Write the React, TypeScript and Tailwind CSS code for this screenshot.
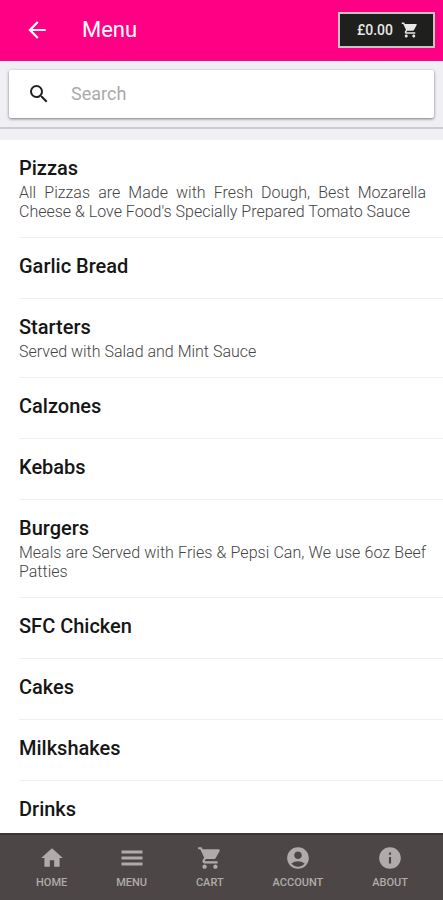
import React from 'react';
import {
  MdAccountCircle,
  MdArrowBack,
  MdHome,
  MdInfo,
  MdSearch,
  MdShoppingCart,
} from 'react-icons/md';

const MenuLines = ({ className }: { className?: string }) => (
  <svg viewBox="0 0 26 26" fill="currentColor" className={className} aria-hidden="true">
    <path d="M2.5 5.5h21v3h-21zM2.5 11.5h21v3h-21zM2.5 17.5h21v3h-21z" />
  </svg>
);

const categories = [
  {
    name: 'Pizzas',
    description:
      "All Pizzas are Made with Fresh Dough, Best Mozarella Cheese & Love Food's Specially Prepared Tomato Sauce",
  },
  { name: 'Garlic Bread' },
  { name: 'Starters', description: 'Served with Salad and Mint Sauce' },
  { name: 'Calzones' },
  { name: 'Kebabs' },
  {
    name: 'Burgers',
    description: 'Meals are Served with Fries & Pepsi Can, We use 6oz Beef Patties',
  },
  { name: 'SFC Chicken' },
  { name: 'Cakes' },
  { name: 'Milkshakes' },
  { name: 'Drinks' },
];

const tabs = [
  { label: 'HOME', icon: MdHome },
  { label: 'MENU', icon: MenuLines },
  { label: 'CART', icon: MdShoppingCart },
  { label: 'ACCOUNT', icon: MdAccountCircle },
  { label: 'ABOUT', icon: MdInfo },
];

const Header = () => (
  <header className="flex h-[61px] shrink-0 items-center bg-[#ff0084] pr-2 pb-[2px] pl-6 text-white">
    <button type="button" aria-label="Back" className="flex">
      <MdArrowBack className="size-[26px]" />
    </button>
    <h1 className="ml-8 flex-1 text-[22px] leading-7">Menu</h1>
    <button
      type="button"
      className="flex h-9 items-center gap-2 border-2 border-[#c9c4c6] bg-[#1f1f1d] pr-[14px] pl-[17px] text-sm font-medium text-[#e8e8e8]"
    >
      £0.00
      <MdShoppingCart className="size-[18px]" />
    </button>
  </header>
);

const SearchBar = () => (
  <div className="shrink-0 border-b-2 border-[#cdcdd1] bg-[#efeff4] px-[9px] py-[9px]">
    <label className="flex h-12 items-center rounded-xs bg-white pl-[18px] shadow-[0_1px_3px_rgba(0,0,0,0.5)]">
      <MdSearch className="size-6 text-[#222]" />
      <input
        type="search"
        placeholder="Search"
        aria-label="Search"
        className="ml-5 min-w-0 flex-1 bg-transparent text-lg outline-none placeholder:text-[#aaa]"
      />
    </label>
  </div>
);

const App = () => {
  return (
    <div className="flex h-screen flex-col bg-[#efeff4] font-[Roboto,sans-serif]">
      <Header />
      <SearchBar />

      {/* Category list */}
      <main className="mt-[11px] min-h-0 flex-1 overflow-hidden bg-white">
        <ul className="pl-[19px]">
          {categories.map((category) => (
            <li
              key={category.name}
              className="min-h-[61px] border-b border-[#efefef] pt-4 pr-[17px] pb-4"
            >
              <h2 className="text-xl leading-6 font-medium text-[#161616]">{category.name}</h2>
              {category.description && (
                <p className="mt-[3px] text-justify text-base leading-[19px] font-light text-[#444]">
                  {category.description}
                </p>
              )}
            </li>
          ))}
        </ul>
      </main>

      {/* Bottom tabs */}
      <nav className="flex h-[67px] shrink-0 justify-between border-t-2 border-[#3a3636] bg-[#4c4746] pt-[10px] pr-[35px] pl-9">
        {tabs.map(({ label, icon: Icon }) => (
          <a key={label} href="#" className="flex flex-col items-center text-[#b0abaa]">
            <Icon className="size-[26px]" />
            <span className="mt-1 text-[11px] leading-4 font-medium">{label}</span>
          </a>
        ))}
      </nav>
    </div>
  );
};

export default App;
